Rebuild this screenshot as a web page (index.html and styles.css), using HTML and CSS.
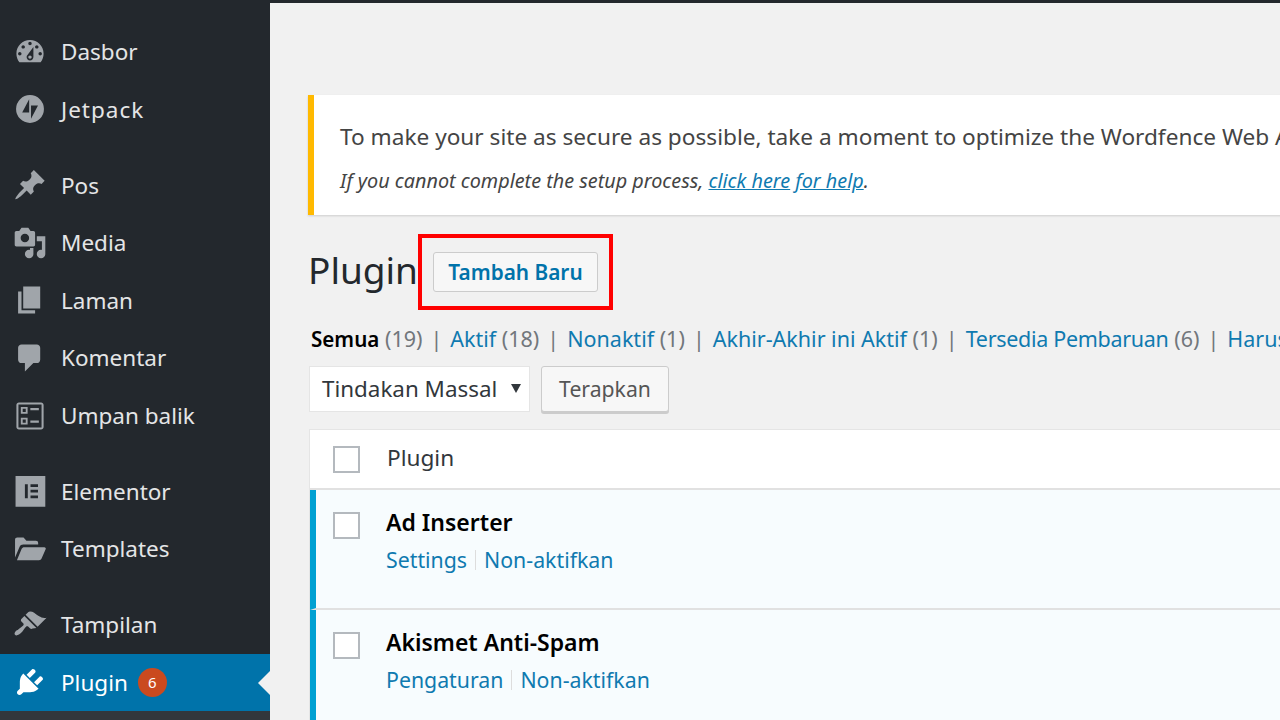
FILE: index.html
```html
<!DOCTYPE html>
<html lang="id">
<head>
    <meta charset="UTF-8">
    <meta name="viewport" content="width=device-width, initial-scale=1.0">
    <title>Plugin</title>
    <link rel="stylesheet" href="styles.css">
</head>
<body>
    <div class="wrap">
        <nav class="sidebar">
            <a class="menu-item">
                <svg class="icon" viewBox="0 0 20 20"><path d="M3.76 16h12.48c1.1-1.37 1.76-3.11 1.76-5 0-4.42-3.58-8-8-8s-8 3.58-8 8c0 1.89.66 3.63 1.76 5zM10 4c.55 0 1 .45 1 1s-.45 1-1 1-1-.45-1-1 .45-1 1-1zM6 6c.55 0 1 .45 1 1s-.45 1-1 1-1-.45-1-1 .45-1 1-1zm8 0c.55 0 1 .45 1 1s-.45 1-1 1-1-.45-1-1 .45-1 1-1zm-5.37 5.55L12 7v6c0 1.1-.9 2-2 2s-2-.9-2-2c0-.57.24-1.08.63-1.45zM4 10c.55 0 1 .45 1 1s-.45 1-1 1-1-.45-1-1 .45-1 1-1zm12 0c.55 0 1 .45 1 1s-.45 1-1 1-1-.45-1-1 .45-1 1-1zm-5 3c0-.55-.45-1-1-1s-1 .45-1 1 .45 1 1 1 1-.45 1-1z"/></svg>
                Dasbor
            </a>
            <a class="menu-item jetpack">
                <svg class="icon" viewBox="0 0 20 20"><path fill-rule="evenodd" d="M10 1.800a8.200 8.200 0 1 0 0 16.400 8.200 8.200 0 0 0 0-16.400zM9.500 4.200v7.900H5.400zM10.600 15.800V7.900h4.100z"/></svg>
                Jetpack
            </a>
            <div class="menu-sep"></div>
            <a class="menu-item">
                <svg class="icon" viewBox="0 0 20 20"><path d="M10.44 3.02l1.82-1.82 6.36 6.35-1.83 1.82c-1.05-.68-2.48-.57-3.41.36l-.75.75c-.92.93-1.04 2.35-.35 3.41l-1.83 1.82-2.41-2.41-2.8 2.79c-.42.42-3.38 2.71-3.8 2.29s1.86-3.39 2.28-3.81l2.79-2.79L4.1 9.36l1.83-1.82c1.05.69 2.48.57 3.4-.36l.75-.75c.93-.92 1.05-2.35.36-3.41z"/></svg>
                Pos
            </a>
            <a class="menu-item">
                <svg class="icon" viewBox="0 0 20 20"><path d="M13 11V4c0-.55-.45-1-1-1h-1.670L9 1H5L3.670 3H2c-.55 0-1 .45-1 1v7c0 .55.45 1 1 1h10c.55 0 1-.45 1-1zM7 4.500c1.380 0 2.500 1.120 2.500 2.500S8.380 9.500 7 9.500 4.500 8.380 4.500 7 5.620 4.500 7 4.500zM14 6h5v10.500c0 1.380-1.120 2.500-2.500 2.500S14 17.880 14 16.500s1.120-2.500 2.500-2.500c.17 0 .34.02.5.05V9h-3V6zm-4 8.050V13h2v3.500c0 1.380-1.120 2.500-2.500 2.500S7 17.880 7 16.500 8.120 14 9.500 14c.17 0 .34.02.5.05z"/></svg>
                Media
            </a>
            <a class="menu-item">
                <svg class="icon" viewBox="0 0 20 20"><path d="M6 15V2h10v13H6zm-1 1h8v2H3V5h2v11z"/></svg>
                Laman
            </a>
            <a class="menu-item">
                <svg class="icon" viewBox="0 0 20 20"><path d="M5 2h9c1.100 0 2 .9 2 2v7c0 1.100-.9 2-2 2h-2l-5 5v-5H5c-1.100 0-2-.9-2-2V4c0-1.100.9-2 2-2z"/></svg>
                Komentar
            </a>
            <a class="menu-item">
                <svg class="icon" viewBox="0 0 20 20"><path fill-rule="evenodd" d="M3.500 2h13c.8 0 1.500.7 1.500 1.500v13c0 .8-.7 1.500-1.500 1.500h-13c-.8 0-1.500-.7-1.500-1.500v-13C2 2.700 2.700 2 3.500 2zM3.200 3.200v13.600h13.600V3.200zM4.600 4.700h4v4h-4zM5.700 5.800v1.800h1.800V5.800zM4.600 11h4v4h-4zM5.700 12.100v1.800h1.800v-1.800zM10.200 5.300h5v1.300h-5zM10.200 12.600h5v1.300h-5z"/></svg>
                Umpan balik
            </a>
            <div class="menu-sep"></div>
            <a class="menu-item">
                <svg class="icon" viewBox="0 0 20 20"><path fill-rule="evenodd" d="M1.500 1.200h17.500v18H1.500zM7 6v8.200h1.700V6zM10.300 6v1.600h4.400V6zM10.300 9.300v1.600h4.400V9.300zM10.300 12.600v1.600h4.400v-1.600z"/></svg>
                Elementor
            </a>
            <a class="menu-item">
                <svg class="icon" viewBox="0 0 20 20"><path d="M1.200 15V4.500c0-.8.6-1.300 1.300-1.300h3.700l1.700 1.900h5.600c.8 0 1.300.5 1.300 1.300v1H6c-1 0-1.700.5-2.100 1.300zM2.300 16.600l2.800-6.700c.3-.7.8-1 1.500-1h11.800c.7 0 1.100.6.8 1.200l-2.400 5.500c-.3.7-.8 1-1.500 1z"/></svg>
                Templates
            </a>
            <div class="menu-sep"></div>
            <a class="menu-item">
                <svg class="icon" viewBox="0 0 20 20"><path d="M14.480 11.060L7.410 3.990l1.500-1.500c.5-.56 2.300-.47 3.510.32 1.210.8 1.430 1.280 2.910 2.100 1.180.64 2.450 1.260 4.450.85zm-.71.71L6.700 4.700 4.930 6.470c-.39.39-.39 1.020 0 1.410l1.060 1.060c.39.39.39 1.030 0 1.420-.6.6-1.430 1.110-2.210 1.690-.35.26-.7.53-1.010.84C1.430 13.230.4 14.930 1.200 15.800c.8.860 2.560-.16 3.910-1.510.31-.31.58-.66.84-1.010.58-.78 1.090-1.610 1.690-2.210.39-.39 1.020-.39 1.410 0l1.060 1.060c.39.39 1.020.39 1.410 0z"/></svg>
                Tampilan
            </a>
            <a class="menu-item active">
                <svg class="icon" viewBox="0 0 20 20"><path d="M13.110 4.360L9.870 7.600 8 5.730l3.240-3.240c.35-.34 1.050-.2 1.560.32.52.51.66 1.210.31 1.550zm-8 1.770l.91-1.120 9.010 9.010-1.190.84c-.71.71-2.630 1.160-3.820 1.160H6.140L4.900 17.260c-.59.59-1.540.59-2.120 0-.59-.58-.59-1.530 0-2.120l1.240-1.240v-3.880c0-1.130.4-3.190 1.090-3.890zm7.260 3.970l3.240-3.240c.34-.35 1.040-.21 1.550.31.52.51.66 1.210.31 1.550l-3.240 3.250z"/></svg>
                Plugin
                <span class="badge">6</span>
            </a>
            <div class="submenu"></div>
        </nav>

        <main class="content">
            <div class="notice">
                <p class="notice-main">To make your site as secure as possible, take a moment to optimize the Wordfence Web Application Firewall</p>
                <p class="notice-sub">If you cannot complete the setup process, <a>click here</a> <a>for help</a>.</p>
            </div>

            <div class="title-row">
                <h1>Plugin</h1>
                <div class="highlight"><button class="add-new">Tambah Baru</button></div>
            </div>

            <ul class="filters">
                <li><b>Semua</b> <span>(19)</span></li>
                <li><a>Aktif</a> <span>(18)</span></li>
                <li><a>Nonaktif</a> <span>(1)</span></li>
                <li><a>Akhir-Akhir ini Aktif</a> <span>(1)</span></li>
                <li><a class="tight">Tersedia Pembaruan</a> <span>(6)</span></li>
                <li><a>Harus Digunakan</a> <span>(1)</span></li>
            </ul>

            <div class="tablenav">
                <div class="select">Tindakan Massal<i class="caret"></i></div>
                <button class="apply">Terapkan</button>
            </div>

            <div class="table">
                <div class="table-head">
                    <span class="check"></span>
                    <span class="head-label">Plugin</span>
                </div>
                <div class="plugin-row">
                    <span class="check"></span>
                    <div class="plugin-info">
                        <strong>Ad Inserter</strong>
                        <div class="row-actions"><a>Settings</a><i></i><a>Non-aktifkan</a></div>
                    </div>
                </div>
                <div class="plugin-row">
                    <span class="check"></span>
                    <div class="plugin-info">
                        <strong>Akismet Anti-Spam</strong>
                        <div class="row-actions"><a>Pengaturan</a><i></i><a>Non-aktifkan</a></div>
                    </div>
                </div>
            </div>
        </main>
    </div>
</body>
</html>
```

FILE: styles.css
```css
html, body {
    margin: 0;
    height: 100%;
    overflow: hidden;
}
body {
    background-color: #f1f1f1;
    color: #444;
    font-family: "Noto Sans", "Open Sans", sans-serif;
    font-size: 21px;
}
p, ul, h1 {
    margin: 0;
    padding: 0;
}
a {
    color: #0f7ab0;
}
.wrap {
    display: flex;
    height: 720px;
    width: 1280px;
    overflow: hidden;
    border-top: 3px solid #23282d;
    box-sizing: border-box;
}

/* sidebar */
.sidebar {
    width: 270px;
    flex: none;
    background-color: #23282d;
    padding-top: 20px;
    box-sizing: border-box;
    display: flex;
    flex-direction: column;
}
.menu-item {
    position: relative;
    display: flex;
    align-items: center;
    height: 57.6px;
    flex: none;
    padding-left: 13px;
    color: #e4e5e6;
    font-size: 22.5px;
}
.jetpack {
    letter-spacing: 1px;
}
.icon {
    width: 34px;
    height: 34px;
    flex: none;
    margin-right: 14px;
    fill: #a0a5aa;
}
.menu-sep {
    height: 18.2px;
    flex: none;
}
.menu-item.active {
    background-color: #0073aa;
    color: #fff;
}
.menu-item.active .icon {
    fill: #fff;
}
.menu-item.active::after {
    content: "";
    position: absolute;
    right: 0;
    top: 17px;
    border: 12px solid transparent;
    border-left: 0;
    border-right-color: #f1f1f1;
}
.badge {
    width: 29px;
    height: 29px;
    margin-left: 10px;
    border-radius: 50%;
    background-color: #ca4a1f;
    color: #fff;
    font-size: 15px;
    display: flex;
    align-items: center;
    justify-content: center;
}
.submenu {
    flex: 1;
    background-color: #32373c;
}

/* main area */
.content {
    flex: none;
    width: 972px;
    margin-left: 38px;
    padding-top: 92px;
}
.notice {
    height: 120px;
    box-sizing: border-box;
    width: 1000px;
    padding: 25px 0 0 26px;
    background-color: #fff;
    border-left: 6px solid #ffb900;
    box-shadow: 0 1px 2px rgba(0, 0, 0, .15);
    white-space: nowrap;
}
.notice-main {
    font-size: 22.63px;
    line-height: 34px;
}
.notice-sub {
    margin-top: 13px;
    font-size: 19.8px;
    line-height: 28px;
    font-style: italic;
}
.notice-sub a {
    text-decoration: underline;
}

.title-row {
    display: flex;
    align-items: center;
    margin-top: 19px;
}
h1 {
    font-size: 37px;
    font-weight: 400;
    line-height: 48px;
    margin-bottom: 4px;
    color: #23282d;
    width: 110px;
}
.highlight {
    border: 4px solid #f00;
    padding: 14px 11px;
    display: flex;
}
button {
    font-family: inherit;
    border-radius: 3px;
    box-sizing: border-box;
}
.add-new {
    width: 165px;
    height: 40px;
    padding: 0;
    background-color: #f7f7f7;
    border: 1px solid #ccc;
    color: #0073aa;
    font-size: 20.8px;
    font-weight: 600;
}
.filters {
    list-style: none;
    display: flex;
    white-space: nowrap;
    margin-top: 12px;
    margin-left: 3px;
    font-size: 21.5px;
    line-height: 34px;
    color: #72777c;
}
.filters li::after {
    content: "|";
    margin: 0 8px;
    color: #72777c;
}
.filters b {
    color: #000;
    font-size: 20.6px;
    font-weight: 600;
}
.filters .tight {
    letter-spacing: -.3px;
}
.tablenav {
    display: flex;
    gap: 11px;
    margin-top: 10px;
    margin-left: 1px;
}
.select {
    position: relative;
    width: 221px;
    height: 46px;
    box-sizing: border-box;
    padding-left: 12px;
    background-color: #fff;
    border: 1px solid #e5e5e5;
    font-size: 22.4px;
    line-height: 43px;
    color: #32373c;
}
.caret {
    position: absolute;
    right: 8px;
    top: 17px;
    border: 5.5px solid transparent;
    border-top: 9px solid #32373c;
    border-bottom: 0;
}
.apply {
    width: 128px;
    height: 46px;
    padding: 0 0 2px;
    background-color: #f7f7f7;
    border: 1px solid #ccc;
    box-shadow: 0 2px 0 #ccc;
    color: #555;
    font-size: 21.2px;
}
.table {
    width: 1000px;
    margin-top: 17px;
    margin-left: 1px;
    background-color: #fff;
    border: 1px solid #e5e5e5;
    border-right: 0;
}
.check {
    width: 27px;
    height: 27px;
    box-sizing: border-box;
    flex: none;
    background-color: #fff;
    border: 2px solid #b4b9be;
}
.table-head {
    height: 60px;
    display: flex;
    align-items: center;
    padding-left: 23px;
    box-sizing: border-box;
    border-bottom: 2px solid #e1e1e1;
}
.head-label {
    margin-left: 27px;
    margin-bottom: 4px;
    font-size: 22.6px;
    color: #32373c;
}
.plugin-row {
    height: 120px;
    box-sizing: border-box;
    display: flex;
    align-items: flex-start;
    padding: 22px 0 0 17px;
    background-color: #f7fcfe;
    border-left: 6px solid #00a0d2;
    border-bottom: 2px solid #e1e1e1;
}
.plugin-info {
    margin-left: 26px;
    margin-top: -7px;
}
.plugin-info strong {
    display: block;
    color: #000;
    font-size: 23px;
    font-weight: 600;
    line-height: 34px;
}
.row-actions {
    display: flex;
    align-items: center;
    margin-top: 4px;
    font-size: 21.3px;
    line-height: 34px;
}
.row-actions i {
    width: 1px;
    height: 20px;
    margin: 0 8px;
    background-color: #ddd;
}
```
